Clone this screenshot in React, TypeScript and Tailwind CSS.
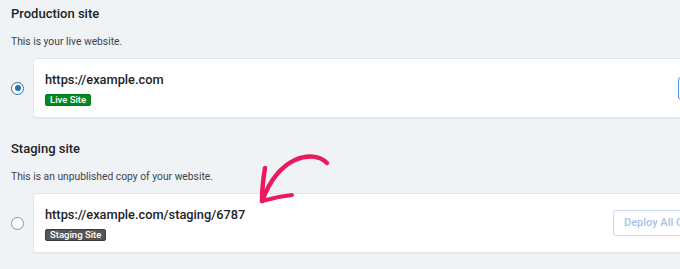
import React from "react";

type Site = {
  title: string;
  description: string;
  url: string;
  badge: string;
  badgeClass: string;
  selected: boolean;
  button: string;
  buttonClass: string;
  urlWidth: string;
};

const sites: Site[] = [
  {
    title: "Production site",
    description: "This is your live website.",
    url: "https://example.com",
    badge: "Live Site",
    badgeClass: "bg-[#008a20] border-[#007a1c]",
    selected: true,
    button: "Push to Staging",
    buttonClass: "h-[23px] border-[#4f94d4] text-[#2271b1]",
    urlWidth: "w-[633px]",
  },
  {
    title: "Staging site",
    description: "This is an unpublished copy of your website.",
    url: "https://example.com/staging/6787",
    badge: "Staging Site",
    badgeClass: "bg-[#555555] border-[#3c3c3c]",
    selected: false,
    button: "Deploy All Changes",
    buttonClass: "h-[26px] border-[#c9dbf5] text-[#a7c3ee]",
    urlWidth: "w-[568px]",
  },
];

function Radio({ checked }: { checked: boolean }) {
  if (checked) {
    return (
      <span className="flex h-[13px] w-[13px] shrink-0 items-center justify-center rounded-full border-[1.5px] border-[#2271b1] bg-white">
        <span className="h-[6px] w-[6px] rounded-full bg-[#2271b1]" />
      </span>
    );
  }
  return (
    <span className="h-[13px] w-[13px] shrink-0 rounded-full border border-[#8c8f94] bg-white" />
  );
}

function SiteSection({ site, first }: { site: Site; first: boolean }) {
  return (
    <section className={first ? "mt-[1px]" : "mt-[22px]"}>
      <h2 className="text-[13px] font-medium leading-[18px] text-[#1d2327]">
        {site.title}
      </h2>
      <p className="mt-[12px] text-[10.3px] leading-[14px] text-[#3c434a]">
        {site.description}
      </p>
      <div className={`flex items-center gap-[9px] ${first ? "mt-[9px]" : "mt-[9px]"}`}>
        <Radio checked={site.selected} />
        <div className="flex h-[60px] w-[820px] shrink-0 items-center rounded-[3px] border border-[#e3e5e8] bg-white pl-[11px] shadow-[0_1px_0_#e6e7e9]">
          <div className={`flex shrink-0 flex-col items-start ${site.urlWidth}`}>
            <span className="text-[12.8px] font-medium leading-[18px] text-[#1d2327]">
              {site.url}
            </span>
            <span
              className={`mt-[5px] rounded-[2px] border px-[4px] text-[9.5px] font-medium leading-[10px] text-white ${site.badgeClass}`}
            >
              {site.badge}
            </span>
          </div>
          <button
            type="button"
            className={`shrink-0 whitespace-nowrap rounded-[3px] border bg-white px-[10px] text-[11px] font-medium ${site.buttonClass}`}
          >
            {site.button}
          </button>
        </div>
      </div>
    </section>
  );
}

export default function App() {
  return (
    <div className="relative h-[269px] w-[680px] overflow-hidden bg-[#f0f3f6] pl-[11px] pt-[4px] font-['Roboto','Liberation_Sans',sans-serif]">
      {sites.map((site, i) => (
        <SiteSection key={site.title} site={site} first={i === 0} />
      ))}
      {/* hand-drawn arrow pointing at the staging url */}
      <svg
        className="pointer-events-none absolute left-[250px] top-[148px]"
        width="90"
        height="60"
        viewBox="0 0 90 60"
        fill="none"
        stroke="#ea1a5c"
        strokeLinecap="round"
        strokeLinejoin="round"
      >
        <path d="M77 15 C70 8 58 6 45 12 C32 18 20 32 12 53" strokeWidth="4.5" />
        <path d="M15 20 C13 32 12 44 12 53" strokeWidth="4.5" />
        <path d="M12 53 C22 50 32 48 42 47" strokeWidth="4" />
      </svg>
    </div>
  );
}
